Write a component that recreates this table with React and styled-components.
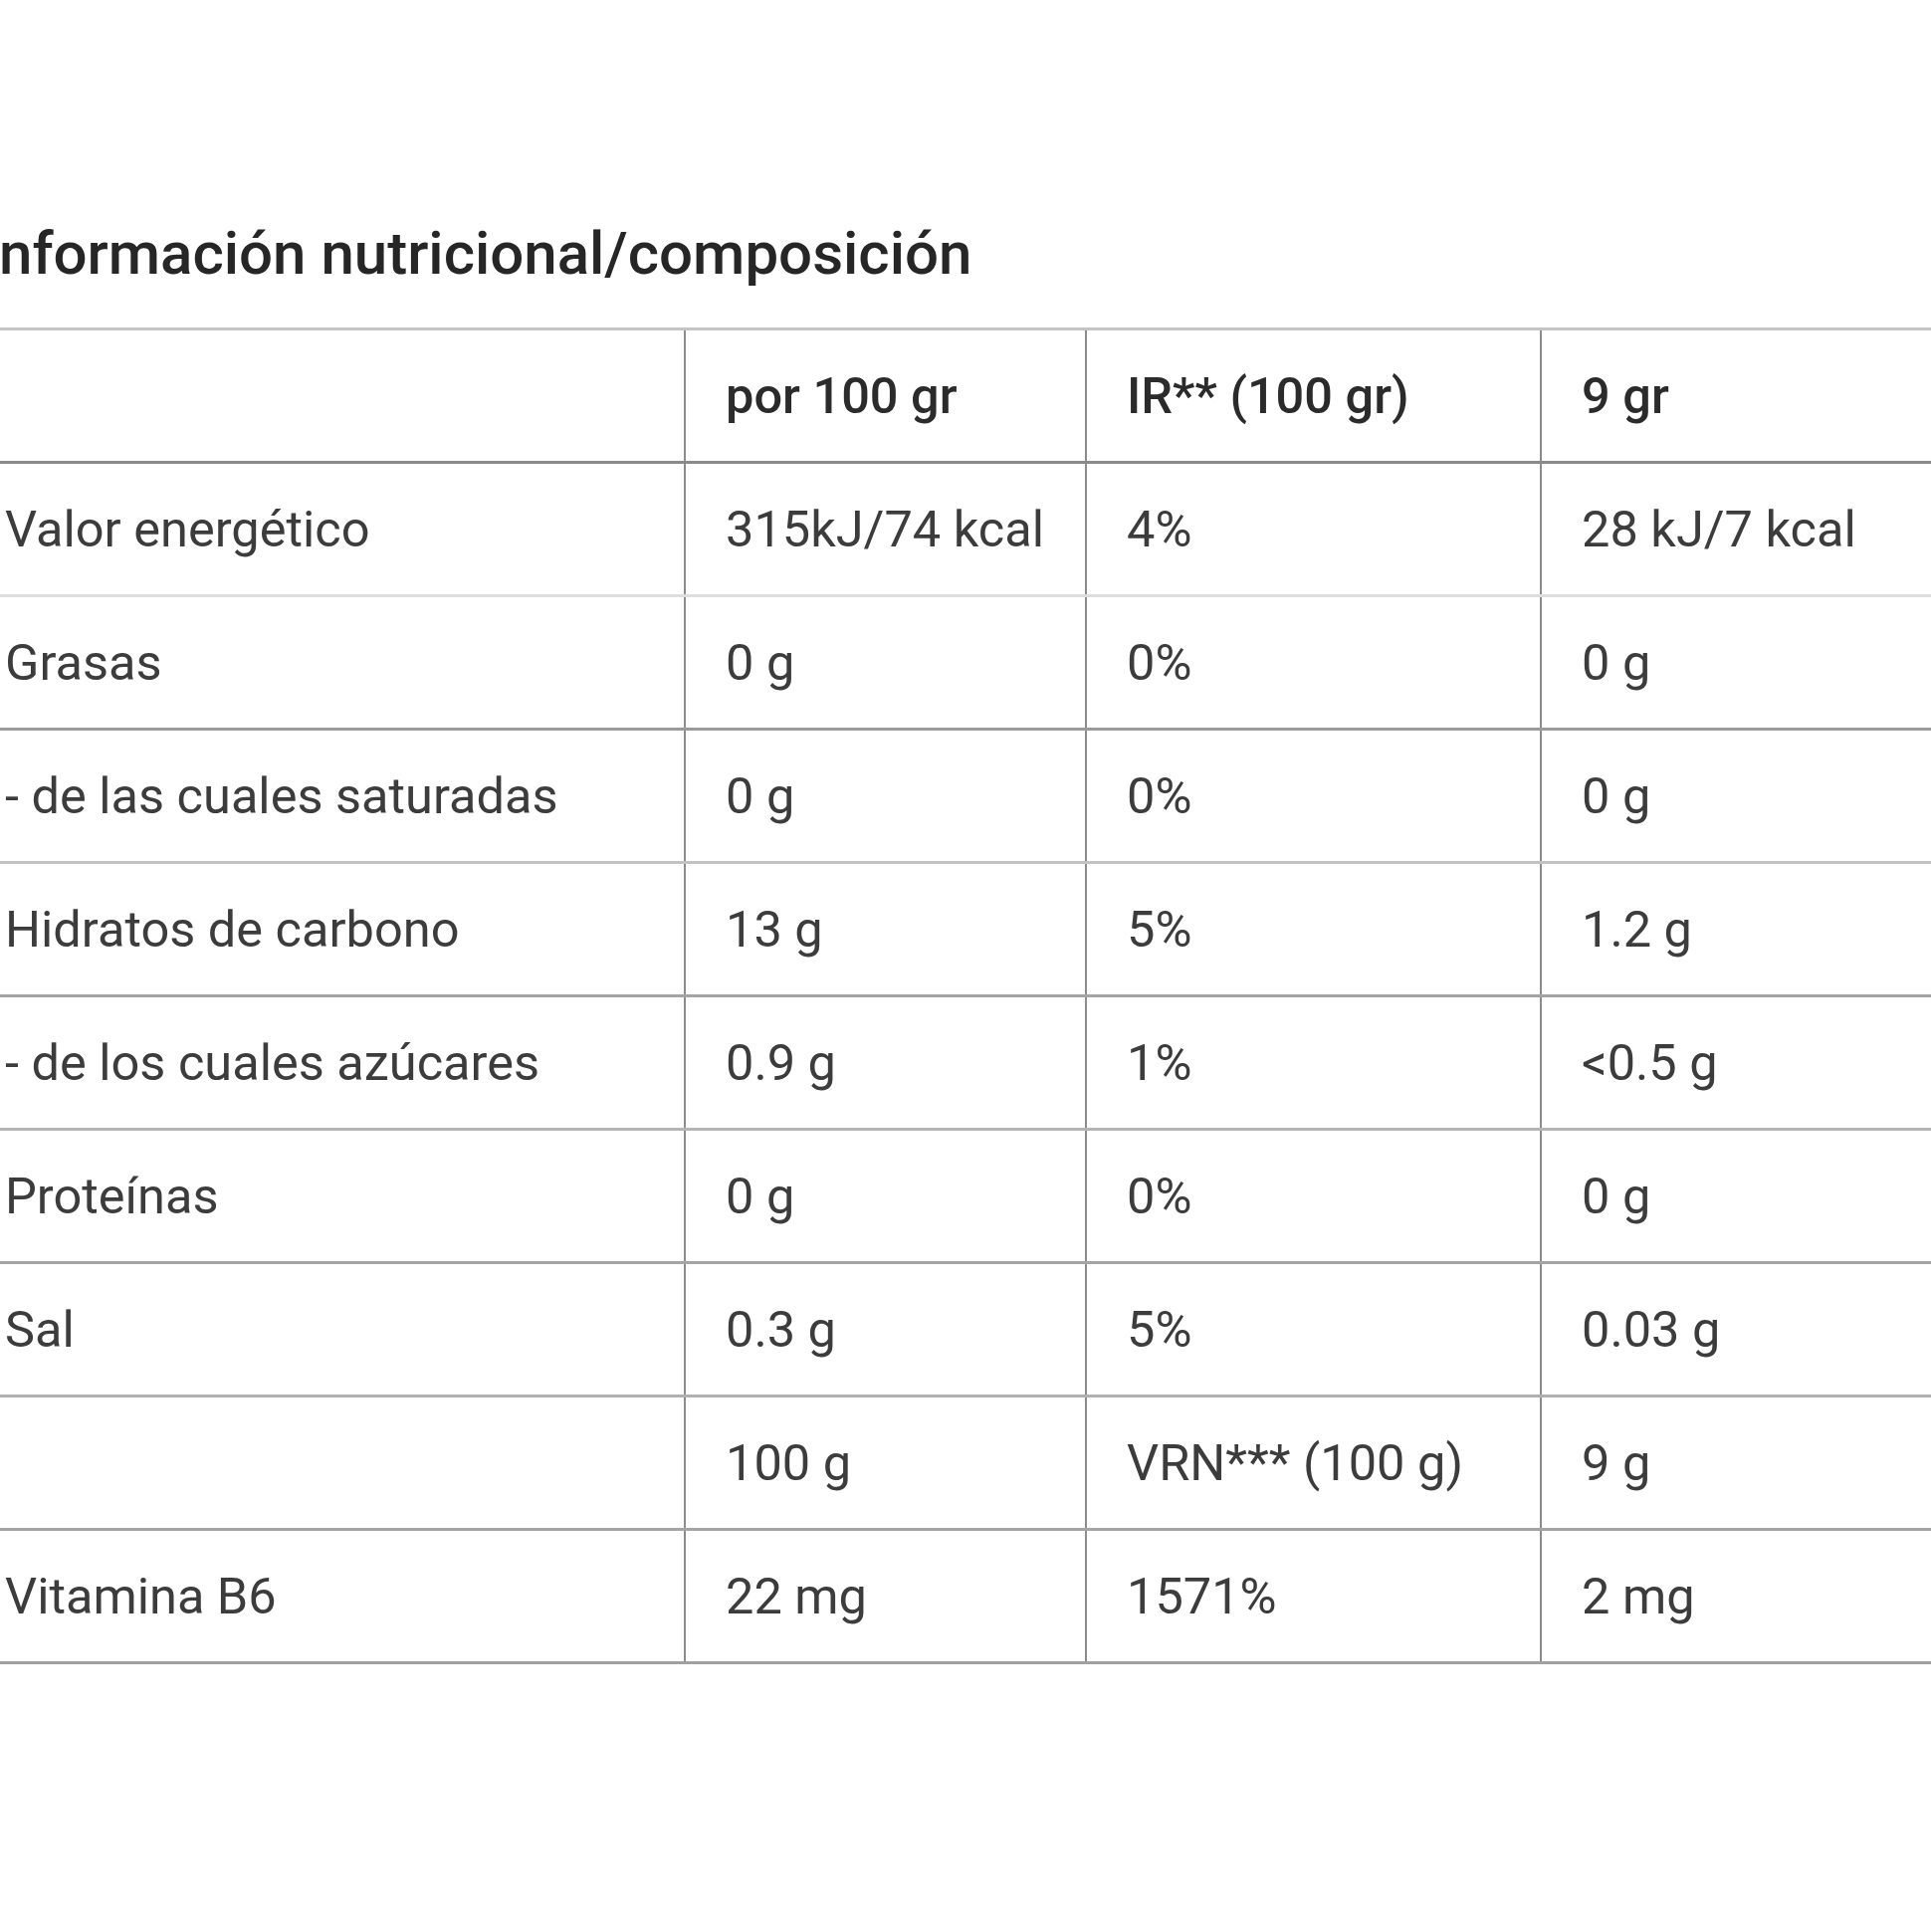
import React from "react";
import styled, { createGlobalStyle } from "styled-components";

const Global = createGlobalStyle`
  html, body { margin: 0; padding: 0; background: #ffffff; }
  body { width: 1940px; height: 1941px; overflow: hidden; font-family: Roboto, "Liberation Sans", Arial, sans-serif; }
`;

const Page = styled.div`
  margin-left: -35px;
  padding-top: 220px;
`;

const Title = styled.h2`
  margin: 0 0 39px 17px;
  font-size: 60px;
  line-height: 70px;
  font-weight: 500;
  color: #262626;
  white-space: nowrap;
`;

const Table = styled.table`
  border-collapse: collapse;
  table-layout: fixed;
  width: 2020px;
  border-top: 3px solid #c4c4c4;
`;

const Col = styled.col`
  width: ${(p) => p.$w}px;
`;

const Row = styled.tr`
  border-bottom: 3px solid ${(p) => p.$line || "#a9a9a9"};
`;

const Cell = styled.td`
  height: 131px;
  padding: 0 40px;
  vertical-align: middle;
  font-size: 50.5px;
  font-weight: ${(p) => (p.$head ? 500 : 400)};
  color: ${(p) => (p.$head ? "#2b2b2b" : "#3c3c3c")};
  white-space: nowrap;
  border-left: 2px solid #8c8c8c;
  &:first-child { border-left: none; }
`;

const widths = [723, 403, 457, 437];

const header = ["", "por 100 gr", "IR** (100 gr)", "9 gr"];

const rows = [
  { c: ["Valor energético", "315kJ/74 kcal", "4%", "28 kJ/7 kcal"], line: "#dedede" },
  { c: ["Grasas", "0 g", "0%", "0 g"], line: "#9a9a9a" },
  { c: ["- de las cuales saturadas", "0 g", "0%", "0 g"], line: "#c2c2c2" },
  { c: ["Hidratos de carbono", "13 g", "5%", "1.2 g"], line: "#a4a4a4" },
  { c: ["- de los cuales azúcares", "0.9 g", "1%", "<0.5 g"], line: "#b4b4b4" },
  { c: ["Proteínas", "0 g", "0%", "0 g"], line: "#a4a4a4" },
  { c: ["Sal", "0.3 g", "5%", "0.03 g"], line: "#b0b0b0" },
  { c: ["", "100 g", "VRN*** (100 g)", "9 g"], line: "#a4a4a4" },
  { c: ["Vitamina B6", "22 mg", "1571%", "2 mg"], line: "#a0a0a0" },
];

export default function App() {
  return (
    <>
      <Global />
      <Page>
        <Title>Información nutricional/composición</Title>
        <Table>
          <colgroup>
            {widths.map((w, i) => (
              <Col key={i} $w={w} />
            ))}
          </colgroup>
          <tbody>
            <Row $line="#8a8a8a">
              {header.map((h, i) => (
                <Cell key={i} $head>
                  {h}
                </Cell>
              ))}
            </Row>
            {rows.map((r, i) => (
              <Row key={i} $line={r.line}>
                {r.c.map((v, j) => (
                  <Cell key={j}>{v}</Cell>
                ))}
              </Row>
            ))}
          </tbody>
        </Table>
      </Page>
    </>
  );
}
